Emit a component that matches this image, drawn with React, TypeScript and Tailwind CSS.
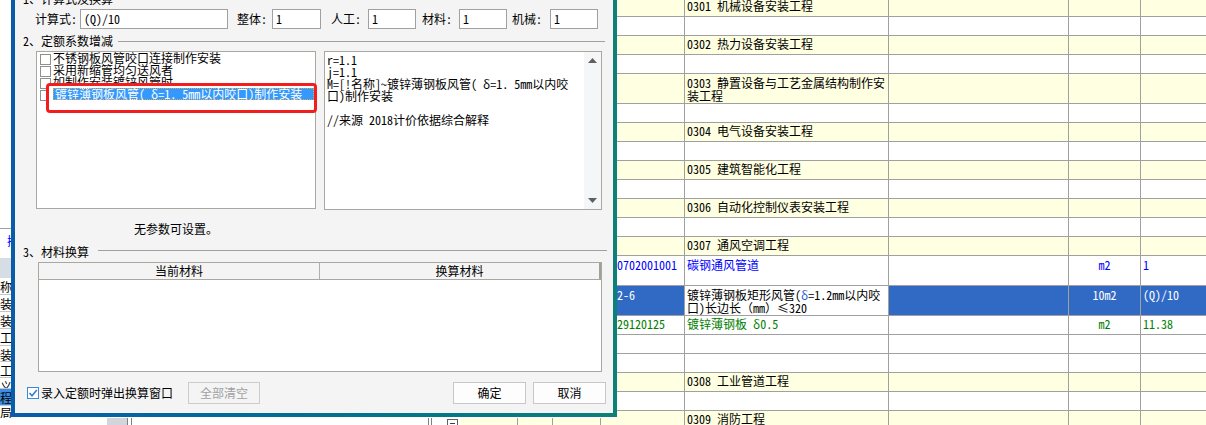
import React from 'react';

const FONT = "font-['Noto_Sans_Mono_CJK_SC','Noto_Sans_CJK_SC',monospace]";

function Input({ className, value }: { className: string; value: string }) {
  return (
    <div className={`h-[20px] border border-[#a0a0a0] bg-white pl-[3px] flex items-center leading-[12px] shrink-0 ${className}`}>
      {value}
    </div>
  );
}

function ListItem({ text, selected }: { text: string; selected?: boolean }) {
  return (
    <div className="flex h-[12px] shrink-0">
      <div className="ml-[3px] mt-[2px] w-[11px] h-[11px] border border-[#8e8f8f] bg-white shrink-0" />
      {selected ? (
        <div className="relative z-10 ml-[2px] w-[261px] h-[12px] bg-[#3399ff] text-white pl-[2px] whitespace-nowrap leading-[12px] outline-1 outline-dotted outline-[#d4a84e] -outline-offset-1">
          {text}
        </div>
      ) : (
        <div className="ml-[2px] whitespace-nowrap leading-[12px]">{text}</div>
      )}
    </div>
  );
}

type Tone = 'y' | 'w' | 's';
interface GRow {
  tall?: boolean;
  bg: Tone;
  c1?: string;
  c2?: React.ReactNode;
  c4?: string;
  c5?: string;
  color?: 'blue' | 'green';
}

const rows: GRow[] = [
  { bg: 'y', c2: '0301 机械设备安装工程' },
  { bg: 'w' },
  { bg: 'y', c2: '0302 热力设备安装工程' },
  { bg: 'w' },
  {
    bg: 'y',
    tall: true,
    c2: (
      <>
        0303 静置设备与工艺金属结构制作安
        <br />
        装工程
      </>
    ),
  },
  { bg: 'w' },
  { bg: 'y', c2: '0304 电气设备安装工程' },
  { bg: 'w' },
  { bg: 'y', c2: '0305 建筑智能化工程' },
  { bg: 'w' },
  { bg: 'y', c2: '0306 自动化控制仪表安装工程' },
  { bg: 'w' },
  { bg: 'y', c2: '0307 通风空调工程' },
  { bg: 'w', tall: true, color: 'blue', c1: '0702001001', c2: '碳钢通风管道', c4: 'm2', c5: '1' },
  {
    bg: 's',
    tall: true,
    c1: '2-6',
    c2: (
      <>
        镀锌薄钢板矩形风管(<span className="text-[#2a5bd7]">δ</span>=1.2mm以内咬
        <br />
        口)长边长（mm）≤320
      </>
    ),
    c4: '10m2',
    c5: '(Q)/10',
  },
  { bg: 'w', color: 'green', c1: '29120125', c2: '镀锌薄钢板 δ0.5', c4: 'm2', c5: '11.38' },
  { bg: 'w' },
  { bg: 'w' },
  { bg: 'y', c2: '0308 工业管道工程' },
  { bg: 'w' },
  { bg: 'y', c2: '0309 消防工程' },
];

function GridRow({ r }: { r: GRow }) {
  const base = r.bg === 'y' ? 'bg-[#ffffe1]' : r.bg === 's' ? 'bg-[#316ac5]' : 'bg-white';
  const c2bg = r.bg === 's' ? 'bg-white' : base;
  const tc =
    r.bg === 's'
      ? 'text-white'
      : r.color === 'blue'
      ? 'text-[#0000ff]'
      : r.color === 'green'
      ? 'text-[#008000]'
      : 'text-black';
  const c2tc = r.bg === 's' ? 'text-black' : tc;
  return (
    <div
      className={`flex shrink-0 border-b border-[#a0a0a0] ${
        r.tall ? 'h-[30px] leading-[13px]' : 'h-[19px] leading-[12px]'
      }`}
    >
      <div className={`w-[68px] shrink-0 border-r border-[#a0a0a0] pt-[2px] overflow-hidden whitespace-nowrap ${base} ${tc}`}>
        {r.c1}
      </div>
      <div className={`w-[204px] shrink-0 border-r border-[#a0a0a0] pt-[2px] pl-[2px] overflow-hidden whitespace-nowrap ${c2bg} ${c2tc}`}>
        {r.c2}
      </div>
      <div className={`w-[180px] shrink-0 border-r border-[#a0a0a0] ${base}`} />
      <div className={`w-[72px] shrink-0 border-r border-[#a0a0a0] pt-[2px] text-center whitespace-nowrap ${base} ${tc}`}>
        {r.c4}
      </div>
      <div className={`flex-1 pt-[2px] pl-[2px] whitespace-nowrap ${base} ${tc}`}>{r.c5}</div>
    </div>
  );
}

function LeftRow({ ch, h, sel }: { ch: string; h: string; sel?: boolean }) {
  return (
    <div className={`shrink-0 overflow-hidden border-b border-[#c4c4c4] pt-[3px] leading-[12px] ${h} ${sel ? 'bg-[#3a8ee6]' : 'bg-white'}`}>
      <span>{ch}</span>
    </div>
  );
}

function LeftBackground() {
  return (
    <div className="w-[617px] h-full flex flex-col shrink-0 bg-white">
      <div className="h-[228px] shrink-0" />
      <div className="h-px bg-[#a0a0a0] shrink-0" />
      <div className="h-[29px] shrink-0 pt-[6px] pl-[7px] text-[#0000ff] leading-[12px]">插</div>
      <div className="h-[20px] shrink-0 bg-[#d6dde4]" />
      <LeftRow ch="称" h="h-[17px]" />
      <LeftRow ch="装" h="h-[17px]" />
      <LeftRow ch="装" h="h-[17px]" />
      <LeftRow ch="工" h="h-[17px]" />
      <LeftRow ch="装" h="h-[16px]" />
      <LeftRow ch="工" h="h-[16px]" />
      <LeftRow ch="义" h="h-[11px]" />
      <LeftRow ch="程" h="h-[17px]" sel />
      <div className="h-[12px] shrink-0 overflow-hidden pt-[1px] leading-[12px]">局</div>
      <div className="h-[8px] shrink-0 flex">
        <div className="w-[107px] bg-white" />
        <div className="w-[20px] bg-[#d4d4dc]" />
        <div className="w-px bg-[#808080]" />
        <div className="w-[3px] bg-white" />
        <div className="w-px bg-[#808080]" />
        <div className="w-[296px] bg-white" />
        <div className="w-px bg-[#808080]" />
        <div className="w-[2px]" />
        <div className="w-px bg-[#808080]" />
        <div className="w-[15px]" />
        <div className="w-[11px] mt-[1px] border border-b-0 border-[#606060] bg-white">
          <div className="mt-[3px] mx-[2px] h-px bg-[#404040]" />
        </div>
        <div className="w-[2px]" />
        <div className="flex-1 bg-[#ffffe1] flex">
          <div className="w-[57px]" />
          <div className="w-px bg-[#a0a0a0]" />
          <div className="w-[34px]" />
          <div className="w-px bg-[#a0a0a0]" />
          <div className="w-[47px]" />
          <div className="w-px bg-[#a0a0a0]" />
        </div>
      </div>
    </div>
  );
}

function UpArrow() {
  return (
    <svg width="9" height="5" viewBox="0 0 9 5">
      <path d="M4.5 0 L9 5 L0 5 Z" fill="#606060" />
    </svg>
  );
}
function DownArrow() {
  return (
    <svg width="9" height="5" viewBox="0 0 9 5">
      <path d="M0 0 L9 0 L4.5 5 Z" fill="#606060" />
    </svg>
  );
}

function Dialog() {
  return (
    <div className="absolute left-[11px] top-[-14px] w-[606px] h-[431px] bg-linear-to-r from-[#0a5ca8] to-[#0d8078] pl-[4px] pr-[4px] pb-[4px]">
      <div className="w-full h-full bg-[#f4f4f4] flex flex-col pt-[7px]">
        {/* Section 1 */}
        <div className="flex h-[12px] shrink-0 pl-[8px] pr-[8px]">
          <span className="leading-[12px] whitespace-nowrap">1、计算式及换算</span>
          <div className="ml-[5px] mt-[6px] flex-1 h-px bg-[#a0a0a0]" />
        </div>
        <div className="mt-[4px] h-[20px] shrink-0 flex items-center pl-[20px]">
          <span className="w-[45px] shrink-0 whitespace-nowrap">计算式:</span>
          <Input className="w-[148px]" value="(Q)/10" />
          <span className="ml-[9px] w-[35px] shrink-0 whitespace-nowrap">整体:</span>
          <Input className="w-[49px]" value="1" />
          <span className="ml-[10px] w-[37px] shrink-0 whitespace-nowrap">人工:</span>
          <Input className="w-[48px]" value="1" />
          <span className="ml-[6px] w-[37px] shrink-0 whitespace-nowrap">材料:</span>
          <Input className="w-[48px]" value="1" />
          <span className="ml-[5px] w-[38px] shrink-0 whitespace-nowrap">机械:</span>
          <Input className="w-[48px]" value="1" />
        </div>

        {/* Section 2 */}
        <div className="mt-[6px] flex h-[12px] shrink-0 pl-[8px] pr-[8px]">
          <span className="leading-[12px] whitespace-nowrap">2、定额系数增减</span>
          <div className="ml-[5px] mt-[6px] flex-1 h-px bg-[#a0a0a0]" />
        </div>
        <div className="mt-[4px] flex shrink-0 pl-[21px]">
          <div className="relative w-[280px] h-[158px] border border-[#a9a79f] bg-white shrink-0">
            <div className="flex flex-col">
              <ListItem text="不锈钢板风管咬口连接制作安装" />
              <ListItem text="采用新缩管均匀送风者" />
              <ListItem text="如制作安装镀锌风管时" />
              <ListItem text="镀锌薄钢板风管( δ=1. 5mm以内咬口)制作安装" selected />
            </div>
            <div className="absolute left-[9px] top-[31px] w-[271px] h-[30px] border-[3px] border-[#f21d1d] rounded-[4px] bg-white" />
          </div>
          <div className="ml-[8px] w-[278px] h-[159px] border border-[#a9a79f] bg-white flex shrink-0">
            <div className="flex-1 pl-[2px] pt-[2px] leading-[12px] whitespace-nowrap overflow-hidden">
              <div className="h-[12px]">r=1.1</div>
              <div className="h-[12px]">j=1.1</div>
              <div className="h-[12px]">M=[!名称]~镀锌薄钢板风管( δ=1. 5mm以内咬</div>
              <div className="h-[12px]">口)制作安装</div>
              <div className="h-[12px]" />
              <div className="h-[12px]">//来源 2018计价依据综合解释</div>
            </div>
            <div className="w-[17px] shrink-0 bg-[#f5f6f8] flex flex-col items-center justify-between pt-[6px] pb-[6px]">
              <UpArrow />
              <DownArrow />
            </div>
          </div>
        </div>
        <div className="mt-[13px] ml-[21px] w-[280px] h-[12px] shrink-0 text-center leading-[12px]">无参数可设置。</div>

        {/* Section 3 */}
        <div className="mt-[11px] flex h-[12px] shrink-0 pl-[8px] pr-[6px]">
          <span className="leading-[12px] whitespace-nowrap">3、材料换算</span>
          <div className="ml-[9px] mt-[4px] flex-1 h-px bg-[#a0a0a0]" />
        </div>
        <div className="mt-[4px] ml-[23px] w-[564px] h-[110px] shrink-0 border border-[#a9a79f] bg-white flex flex-col">
          <div className="h-[17px] shrink-0 flex bg-[#f4f4f4] border-b border-[#a9a79f]">
            <div className="w-[281px] shrink-0 flex items-center justify-center border-r border-[#b0b0b0] leading-[12px]">
              当前材料
            </div>
            <div className="flex-1 flex items-center justify-center border-r-2 border-[#a09f98] leading-[12px]">
              换算材料
            </div>
          </div>
          <div className="flex-1" />
        </div>

        {/* Bottom row */}
        <div className="mt-[10px] h-[22px] shrink-0 flex items-center pl-[12px] pr-[7px]">
          <div className="w-[12px] h-[12px] shrink-0 border border-[#3c8ad6] bg-white flex items-center justify-center">
            <svg width="10" height="10" viewBox="0 0 10 10">
              <path d="M1.5 5 L4 7.8 L8.8 2" fill="none" stroke="#2f7fd0" strokeWidth="1.6" />
            </svg>
          </div>
          <span className="ml-[2px] whitespace-nowrap leading-[12px]">录入定额时弹出换算窗口</span>
          <div className="ml-[15px] w-[72px] h-[22px] shrink-0 border border-[#cccccc] bg-[#f4f4f4] text-[#a0a0a0] flex items-center justify-center">
            全部清空
          </div>
          <div className="ml-auto w-[73px] h-[22px] shrink-0 border border-[#c8c8c8] bg-[#fdfdfd] flex items-center justify-center">
            确定
          </div>
          <div className="ml-[7px] w-[73px] h-[22px] shrink-0 border border-[#c8c8c8] bg-[#fdfdfd] flex items-center justify-center">
            取消
          </div>
        </div>
      </div>
    </div>
  );
}

export default function App() {
  return (
    <div className={`relative w-[1206px] h-[425px] overflow-hidden bg-white text-[12px] leading-[12px] text-black ${FONT}`}>
      <div className="flex h-full">
        <LeftBackground />
        <div className="flex-1 flex flex-col mt-[-2px] min-w-0">
          {rows.map((r, i) => (
            <GridRow key={i} r={r} />
          ))}
        </div>
      </div>
      <Dialog />
    </div>
  );
}
